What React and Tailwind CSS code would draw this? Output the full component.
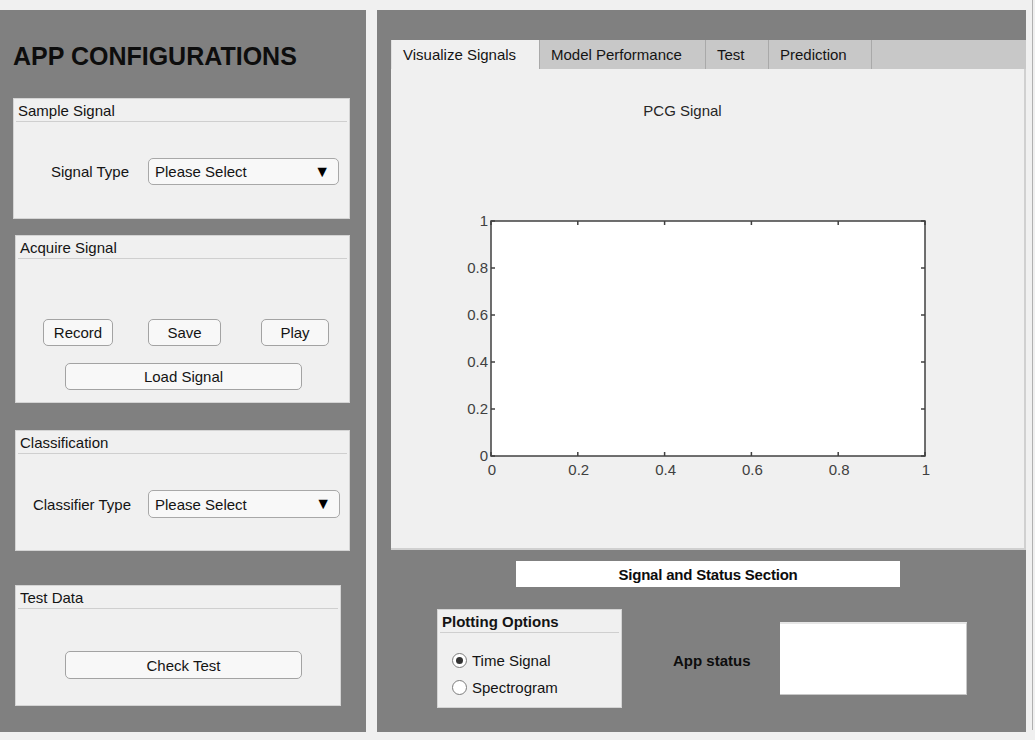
import React from 'react'

const font = "font-['Liberation_Sans',Arial,sans-serif]"

function Panel({ title, className, bold, children }) {
  return (
    <div className={`bg-[#f0f0f0] border border-[#d4d4d4] flex flex-col ${className}`}>
      <div className="mx-[2px] h-[23px] border-b border-[#cfcfcf] flex items-center px-[2px]">
        <span className={`text-[15px] leading-none text-[#141414] ${bold ? 'font-bold' : ''}`}>{title}</span>
      </div>
      <div className="relative flex-1">{children}</div>
    </div>
  )
}

function Btn({ children, className }) {
  return (
    <button className={`bg-[#f8f8f8] border border-[#a3a3a3] rounded-[5px] text-[15px] text-[#141414] leading-none flex items-center justify-center ${className}`}>
      {children}
    </button>
  )
}

function Dropdown({ className }) {
  return (
    <div className={`bg-[#f8f8f8] border border-[#a8a8a8] rounded-[5px] flex items-center justify-between pl-[6px] pr-[8px] ${className}`}>
      <span className="text-[15px] leading-none text-[#141414]">Please Select</span>
      <span className="text-[16px] leading-none text-black">▼</span>
    </div>
  )
}

function Radio({ checked, label }) {
  return (
    <div className="flex items-center gap-[5px] h-[20px]">
      <span className="w-[15px] h-[15px] rounded-full border border-[#7c7c7c] bg-white flex items-center justify-center">
        {checked && <span className="w-[7px] h-[7px] rounded-full bg-[#333]" />}
      </span>
      <span className="text-[15px] leading-none text-[#141414]">{label}</span>
    </div>
  )
}

function Chart() {
  const x0 = 100, x1 = 534, y0 = 387, y1 = 152
  const ticks = [0, 0.2, 0.4, 0.6, 0.8, 1]
  const lbl = (t) => (t === 0 || t === 1 ? String(t) : t.toFixed(1))
  return (
    <svg width="633" height="480" className="block">
      <text x="291.5" y="47" textAnchor="middle" fontSize="15" fill="#262626" fontFamily="Liberation Sans, Arial, sans-serif">PCG Signal</text>
      <rect x={x0} y={y1} width={x1 - x0} height={y0 - y1} fill="#fff" stroke="#404040" strokeWidth="1.5" />
      {ticks.map((t) => {
        const x = x0 + (x1 - x0) * t
        const y = y0 - (y0 - y1) * t
        return (
          <g key={t}>
            <line x1={x} y1={y0} x2={x} y2={y0 - 4} stroke="#404040" strokeWidth="1.5" />
            <line x1={x} y1={y1} x2={x} y2={y1 + 4} stroke="#404040" strokeWidth="1.5" />
            <line x1={x0} y1={y} x2={x0 + 4} y2={y} stroke="#404040" strokeWidth="1.5" />
            <line x1={x1} y1={y} x2={x1 - 4} y2={y} stroke="#404040" strokeWidth="1.5" />
            <text x={x + 1} y={y0 + 19} textAnchor="middle" fontSize="15" fill="#404040" fontFamily="Liberation Sans, Arial, sans-serif">{lbl(t)}</text>
            <text x={x0 - 3} y={y + 5} textAnchor="end" fontSize="15" fill="#404040" fontFamily="Liberation Sans, Arial, sans-serif">{lbl(t)}</text>
          </g>
        )
      })}
    </svg>
  )
}

export default function App() {
  const tabs = [
    { name: 'Visualize Signals', w: 'w-[149px]', active: true },
    { name: 'Model Performance', w: 'w-[166px]' },
    { name: 'Test', w: 'w-[63px]' },
    { name: 'Prediction', w: 'w-[103px]' },
  ]

  return (
    <div className={`w-[1035px] h-[740px] bg-[#f0f0f0] pt-[10px] flex ${font}`}>
      {/* left: configuration column */}
      <div className="w-[366px] h-[722px] bg-[#808080] flex flex-col">
        <h1 className="mt-[32px] ml-[13px] text-[25px] leading-[28px] font-bold text-[#0d0d0d]">APP CONFIGURATIONS</h1>

        <Panel title="Sample Signal" className="mt-[28px] ml-[13px] w-[337px] h-[121px]">
          <div className="flex items-center pt-[36px]">
            <span className="w-[115px] text-right text-[15px] leading-none text-[#141414]">Signal Type</span>
            <Dropdown className="ml-[19px] w-[191px] h-[27px]" />
          </div>
        </Panel>

        <Panel title="Acquire Signal" className="mt-[16px] ml-[15px] w-[335px] h-[168px]">
          <div className="flex pt-[60px]">
            <Btn className="ml-[27px] w-[70px] h-[27px]">Record</Btn>
            <Btn className="ml-[35px] w-[73px] h-[27px]">Save</Btn>
            <Btn className="ml-[40px] w-[68px] h-[27px]">Play</Btn>
          </div>
          <Btn className="mt-[17px] ml-[49px] w-[237px] h-[27px]">Load Signal</Btn>
        </Panel>

        <Panel title="Classification" className="mt-[27px] ml-[15px] w-[335px] h-[121px]">
          <div className="flex items-center pt-[36px]">
            <span className="w-[115px] text-right text-[15px] leading-none text-[#141414]">Classifier Type</span>
            <Dropdown className="ml-[17px] w-[192px] h-[28px]" />
          </div>
        </Panel>

        <Panel title="Test Data" className="mt-[34px] ml-[15px] w-[326px] h-[121px]">
          <Btn className="mt-[42px] ml-[49px] w-[237px] h-[28px]">Check Test</Btn>
        </Panel>
      </div>

      {/* right: signal column */}
      <div className="ml-[11px] w-[649px] h-[722px] bg-[#808080] flex flex-col">
        <div className="mt-[30px] ml-[14px] w-[635px] h-[510px] flex flex-col">
          <div className="h-[29px] bg-[#c8c8c8] flex">
            {tabs.map((t) => (
              <div
                key={t.name}
                className={`${t.w} h-full border-r border-[#a9a9a9] flex items-center pl-[11px] pb-[1px] text-[15px] leading-none text-[#141414] ${t.active ? 'bg-[#f0f0f0] border-l border-l-[#e0e0e0]' : ''}`}
              >
                {t.name}
              </div>
            ))}
          </div>
          <div className="flex-1 bg-[#f0f0f0] border-r-2 border-b-2 border-[#d0d0d0] overflow-hidden">
            <Chart />
          </div>
        </div>

        <div className="mt-[11px] ml-[139px] w-[384px] h-[26px] bg-white flex items-center justify-center">
          <span className="text-[15px] leading-none font-bold text-[#0d0d0d] tracking-[-0.2px]">Signal and Status Section</span>
        </div>

        <div className="mt-[22px] flex items-start">
          <Panel title="Plotting Options" bold className="ml-[60px] w-[185px] h-[99px]">
            <div className="flex flex-col gap-[7px] pt-[17px] pl-[14px]">
              <Radio checked label="Time Signal" />
              <Radio label="Spectrogram" />
            </div>
          </Panel>
          <span className="ml-[51px] mt-[44px] text-[15px] leading-none font-bold text-[#0d0d0d]">App status</span>
          <div className="ml-[29px] mt-[13px] w-[187px] h-[73px] bg-white border-t-2 border-[#e6e6e6] border-r border-b border-r-[#c8c8c8] border-b-[#c8c8c8]" />
        </div>
      </div>

      <div className="ml-[6px] w-px h-[730px] -mt-[10px] bg-[#b0b0b0]" />
    </div>
  )
}
